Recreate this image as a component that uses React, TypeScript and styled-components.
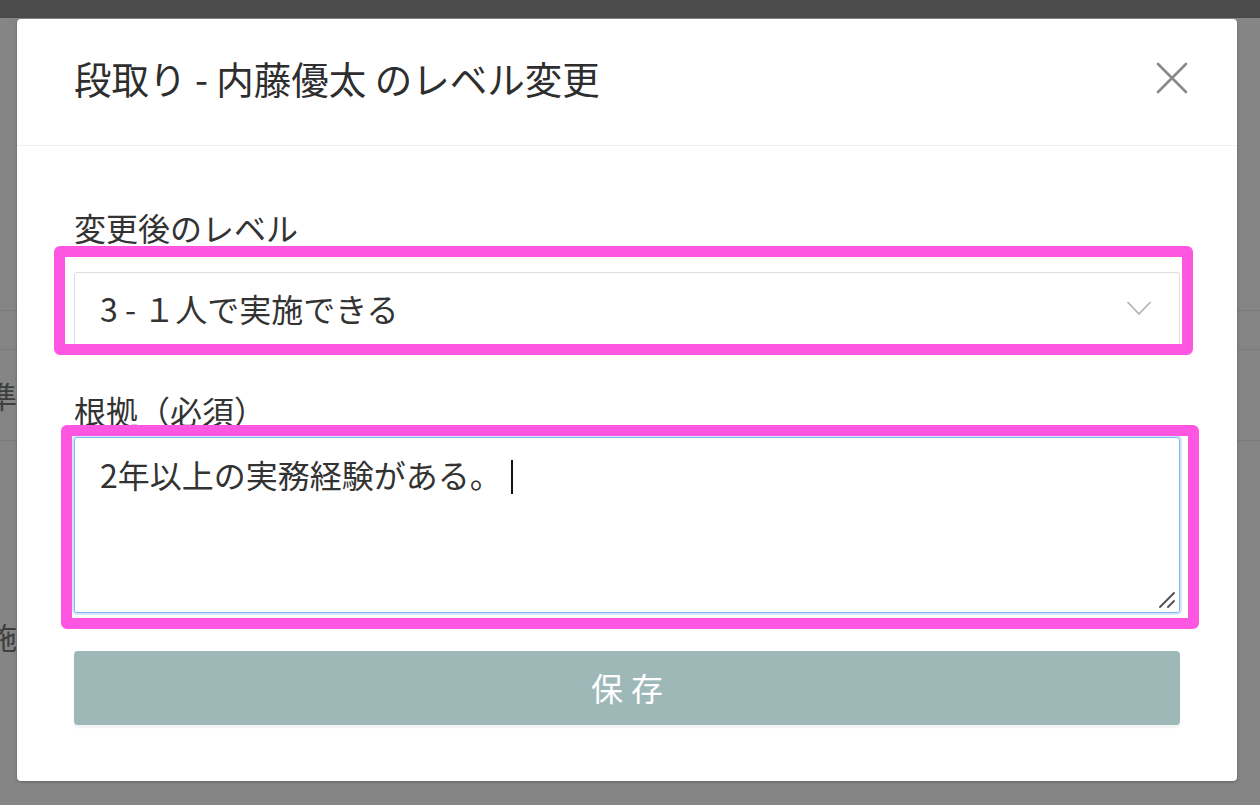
import { createGlobalStyle, styled } from "styled-components";

const GlobalStyle = createGlobalStyle`
    body {
        margin: 0;
        font-family: "Noto Sans CJK JP", "Noto Sans", sans-serif;
        color: #333;
    }
`;

const Screen = styled.div`
    position: relative;
    height: 805px;
    background: #858585;
    overflow: hidden;
`;

const TopBar = styled.div`
    height: 18px;
    background: #4b4b4b;
`;

const BgSpacer = styled.div`
    height: 292px;
`;

const BgRow = styled.div<{ $height: number }>`
    display: flex;
    align-items: center;
    height: ${(p) => p.$height}px;
    border-top: 1px solid #7a7a7a;
    box-sizing: border-box;
`;

// the page behind the dialog; only the last glyph peeks out at the left edge
const BgCell = styled.div`
    display: flex;
    justify-content: flex-end;
    width: 17px;
    overflow: hidden;
    font-size: 30px;
    color: #3e3e3e;
    white-space: nowrap;
`;

const Modal = styled.div`
    position: absolute;
    top: 19px;
    left: 17px;
    width: 1220px;
    background: #fff;
    border-radius: 4px;
    box-shadow: 0 1px 3px rgba(0, 0, 0, 0.25);
`;

const Header = styled.div`
    display: flex;
    align-items: center;
    justify-content: space-between;
    padding: 37px 48px 45px 57px;
    border-bottom: 1px solid #efefef;
`;

const Title = styled.h2`
    margin: 0;
    font-size: 37.5px;
    line-height: 44px;
    font-weight: 400;
    color: #2e2e2e;
`;

const CloseButton = styled.button`
    display: flex;
    padding: 0;
    border: none;
    background: none;
    cursor: pointer;
`;

const Body = styled.div`
    display: flex;
    flex-direction: column;
    padding: 57px 57px 56px;
`;

const Label = styled.label<{ $gap: number }>`
    font-size: 32px;
    line-height: 48px;
    color: #333;
    margin-bottom: ${(p) => p.$gap}px;
`;

const Field = styled.div<{ $gap: number }>`
    position: relative;
    margin-bottom: ${(p) => p.$gap}px;
`;

const SelectBox = styled.div`
    display: flex;
    align-items: center;
    justify-content: space-between;
    height: 76px;
    box-sizing: border-box;
    padding: 0 27px 4px 25px;
    border: 1px solid #dcdce2;
    border-radius: 3px;
    font-size: 32px;
    color: #333;
`;

const TextBox = styled.div`
    position: relative;
    height: 176px;
    box-sizing: border-box;
    padding: 12px 25px;
    border: 1px solid #7db8f4;
    border-radius: 3px;
    box-shadow: 0 0 0 2px #d4e7fc;
    font-size: 32px;
    line-height: 48px;
    color: #333;
`;

const Caret = styled.span`
    display: inline-block;
    width: 2px;
    height: 34px;
    margin-left: 2px;
    vertical-align: -6px;
    background: #111;
`;

const Grip = styled.svg`
    position: absolute;
    right: 3px;
    bottom: 3px;
`;

const Highlight = styled.div<{ $t: number; $r: number; $b: number; $l: number }>`
    position: absolute;
    top: ${(p) => p.$t}px;
    right: ${(p) => p.$r}px;
    bottom: ${(p) => p.$b}px;
    left: ${(p) => p.$l}px;
    border: 11px solid #ff56e1;
    border-radius: 6px;
    pointer-events: none;
`;

const SaveButton = styled.button`
    height: 74px;
    border: none;
    border-radius: 4px;
    background: #9eb8b8;
    box-shadow: 0 3px 2px rgba(0, 0, 0, 0.05);
    color: #fff;
    font-family: inherit;
    font-size: 32px;
    letter-spacing: 8px;
    padding: 0 0 2px 8px;
`;

const App = () => {
    return (
        <>
            <GlobalStyle />
            <Screen>
                <TopBar />
                <BgSpacer />
                <BgRow $height={39} />
                <BgRow $height={91}>
                    <BgCell>基準</BgCell>
                </BgRow>
                <BgRow $height={390}>
                    <BgCell>実施</BgCell>
                </BgRow>

                <Modal>
                    <Header>
                        <Title>段取り - 内藤優太 のレベル変更</Title>
                        <CloseButton aria-label="閉じる">
                            <svg width="34" height="34" viewBox="0 0 34 34">
                                <path
                                    d="M3 3 L31 31 M31 3 L3 31"
                                    stroke="#898989"
                                    strokeWidth="2.6"
                                    strokeLinecap="round"
                                />
                            </svg>
                        </CloseButton>
                    </Header>
                    <Body>
                        <Label $gap={21}>変更後のレベル</Label>
                        <Field $gap={38}>
                            <SelectBox>
                                <span>3 - １人で実施できる</span>
                                <svg width="26" height="16" viewBox="0 0 26 16">
                                    <path
                                        d="M1.5 2 L13 14 L24.5 2"
                                        fill="none"
                                        stroke="#b4b4b4"
                                        strokeWidth="1.8"
                                    />
                                </svg>
                            </SelectBox>
                            <Highlight $t={-26} $r={-13} $b={-7} $l={-20} />
                        </Field>
                        <Label $gap={3}>根拠（必須）</Label>
                        <Field $gap={38}>
                            <TextBox>
                                2年以上の実務経験がある。 <Caret />
                                <Grip width="18" height="18" viewBox="0 0 18 18">
                                    <path
                                        d="M2 16 L16 2 M10 16 L16 10"
                                        stroke="#555"
                                        strokeWidth="2"
                                        strokeLinecap="round"
                                    />
                                </Grip>
                            </TextBox>
                            <Highlight $t={-12} $r={-19} $b={-16} $l={-13} />
                        </Field>
                        <SaveButton>保存</SaveButton>
                    </Body>
                </Modal>
            </Screen>
        </>
    );
};

export default App;
